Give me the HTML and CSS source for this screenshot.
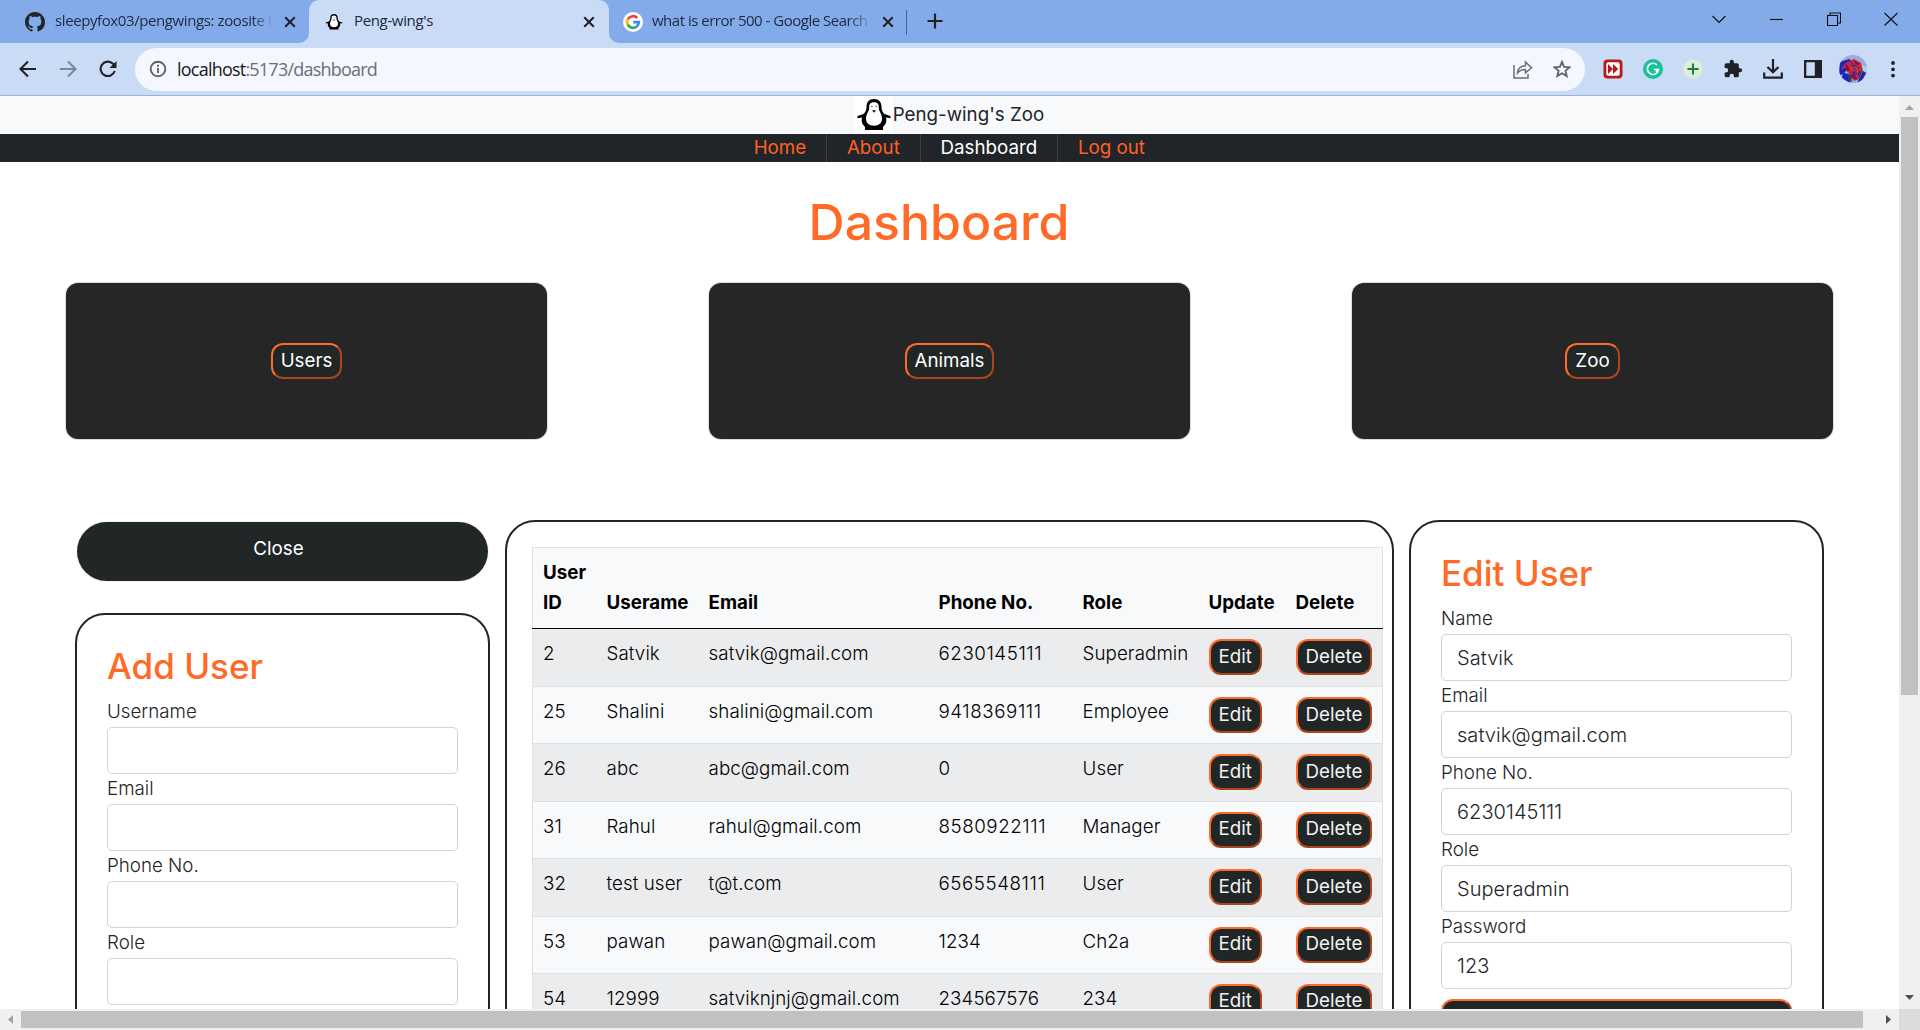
FILE: index.html
```html
<!DOCTYPE html>
<html lang="en">
<head>
<meta charset="utf-8">
<title>Peng-wing's</title>
<link rel="stylesheet" href="styles.css">
</head>
<body>
<div class="window">
  <header class="tabstrip">
    <div class="tab tab-first">
      <svg class="favicon" width="20" height="20" viewBox="0 0 16 16"><path fill="#20262c" d="M8 0C3.58 0 0 3.58 0 8c0 3.54 2.29 6.53 5.47 7.59.4.07.55-.17.55-.38 0-.19-.01-.82-.01-1.49-2.01.37-2.53-.49-2.69-.94-.09-.23-.48-.94-.82-1.13-.28-.15-.68-.52-.01-.53.63-.01 1.08.58 1.23.82.72 1.21 1.87.87 2.33.66.07-.52.28-.87.51-1.07-1.78-.2-3.64-.89-3.64-3.95 0-.87.31-1.59.82-2.15-.08-.2-.36-1.02.08-2.12 0 0 .67-.21 2.2.82.64-.18 1.32-.27 2-.27s1.36.09 2 .27c1.53-1.04 2.2-.82 2.2-.82.44 1.1.16 1.92.08 2.12.51.56.82 1.27.82 2.15 0 3.07-1.87 3.75-3.65 3.95.29.25.54.73.54 1.48 0 1.07-.01 1.93-.01 2.2 0 .21.15.46.55.38A8.01 8.01 0 0 0 16 8c0-4.42-3.58-8-8-8z"/></svg>
      <span class="tab-title fade t1">sleepyfox03/pengwings: zoosite in</span>
      <svg class="close" width="12" height="12" viewBox="0 0 12 12"><path d="M1.200 1.200l9.600 9.600M10.800 1.200l-9.600 9.600"/></svg>
    </div>
    <div class="tab tab-active">
      <svg class="favicon" width="18" height="18" viewBox="0 0 36 36"><use href="#penguin"/></svg>
      <span class="tab-title t2">Peng-wing's</span>
      <svg class="close" width="12" height="12" viewBox="0 0 12 12"><path d="M1.200 1.200l9.600 9.600M10.800 1.200l-9.600 9.600"/></svg>
    </div>
    <div class="tab tab-last">
      <svg class="favicon" width="20" height="20" viewBox="0 0 20 20"><circle cx="10" cy="10" r="10" fill="#fff"/><g fill="none" stroke-width="2.700"><path stroke="#ea4335" d="M4.900 7.200A5.800 5.800 0 0 1 14.200 6"/><path stroke="#fbbc05" d="M4.900 7.100a5.900 5.900 0 0 0 0 5.800"/><path stroke="#34a853" d="M4.800 12.700a5.800 5.800 0 0 0 9 1.700"/><path stroke="#4285f4" d="M10.200 10.200h5.500a5.800 5.800 0 0 1-1.900 4.200"/></g></svg>
      <span class="tab-title fade t3">what is error 500 - Google Search</span>
      <svg class="close" width="12" height="12" viewBox="0 0 12 12"><path d="M1.200 1.200l9.600 9.600M10.800 1.200l-9.600 9.600"/></svg>
    </div>
    <i class="tab-divider"></i>
    <svg class="newtab" width="16" height="16" viewBox="0 0 16 16"><path d="M8 .5v15M.5 8h15"/></svg>
    <div class="controls">
      <svg width="14" height="14" viewBox="0 0 14 14"><path d="M.5 4l6.500 6.500L13.500 4"/></svg>
      <svg width="14" height="14" viewBox="0 0 14 14"><path d="M0 7.500h13"/></svg>
      <svg width="14" height="14" viewBox="0 0 14 14"><path d="M.5 3.500h10v10H.5zM3 3.500V1h10.500v10H10.500"/></svg>
      <svg width="14" height="14" viewBox="0 0 14 14"><path d="M.5 1l13 12.500M13.500 1L.5 13.500"/></svg>
    </div>
  </header>

  <div class="toolbar">
    <div class="navbtns">
      <svg width="18" height="18" viewBox="0 0 18 18"><path d="M17 9H2M9 1.500L1.500 9 9 16.500"/></svg>
      <svg class="dim" width="18" height="18" viewBox="0 0 18 18"><path d="M1 9h15M9 1.500L16.500 9 9 16.500"/></svg>
      <svg width="18" height="18" viewBox="0 0 18 18"><path d="M15.700 11A7.200 7.200 0 1 1 14 3.800L16 6"/><path d="M17.500 1v7h-7z" fill="#202124" stroke="none"/></svg>
    </div>
    <div class="omnibox">
      <svg class="info" width="18" height="18" viewBox="0 0 18 18"><circle cx="9" cy="9" r="7.300"/><path d="M9 8v5M9 4.800v2"/></svg>
      <span class="url"><b>localhost</b>:5173/dashboard</span>
      <svg class="share" width="20" height="19" viewBox="0 0 20 19"><path d="M1 5v13h14v-4M4.500 13c.5-5 3-7 8-7.200V2l6 5.800-6 5V9.500c-4 0-6 1-8 3.500z"/></svg>
      <svg class="star" width="18" height="18" viewBox="0 0 18 18"><path d="M9 1.800l2.100 5 5.400.5-4.100 3.500 1.300 5.300L9 13.300l-4.700 2.800 1.300-5.300L1.500 7.300l5.400-.5z"/></svg>
    </div>
    <div class="extensions">
      <svg width="20" height="20" viewBox="0 0 20 20"><rect x=".5" y=".5" width="19" height="19" rx="4" fill="#b8191d"/><rect x="3.300" y="3.300" width="13.400" height="13.400" rx="2" fill="#fff"/><path fill="#b8191d" d="M5 5l5 5-5 5zM10 5l5.300 5-5.300 5z"/></svg>
      <svg width="20" height="20" viewBox="0 0 20 20"><circle cx="10" cy="10" r="10" fill="#15c39a"/><path d="M14 6A5.600 5.600 0 1 0 15.500 10.500H11M15.500 10.500l-2.500 2.500" fill="none" stroke="#fff" stroke-width="1.700"/></svg>
      <svg width="20" height="20" viewBox="0 0 20 20"><circle cx="10" cy="10" r="9.800" fill="#dceed8"/><path d="M10 4.500v11M4.500 10h11" stroke="#1c7a4c" stroke-width="2"/></svg>
      <svg width="20" height="20" viewBox="0 0 24 24"><path fill="#202124" d="M20.500 11H19V7a2 2 0 0 0-2-2h-4V3.500a2.500 2.500 0 0 0-5 0V5H4a2 2 0 0 0-2 2v3.800h1.500a2.700 2.700 0 0 1 0 5.400H2V20a2 2 0 0 0 2 2h3.800v-1.500a2.700 2.700 0 0 1 5.400 0V22H17a2 2 0 0 0 2-2v-4h1.500a2.500 2.500 0 0 0 0-5z"/></svg>
      <svg width="20" height="20" viewBox="0 0 20 20"><path d="M10 0v13M4.500 8L10 13.300 15.500 8M1.200 13.500v5.200h17.600v-5.200" fill="none" stroke="#202124" stroke-width="2.200"/></svg>
      <svg width="20" height="20" viewBox="0 0 20 20"><path fill="#202124" fill-rule="evenodd" d="M1 1h18v18H1zM3.300 3.300v13.400h8.500V3.300z"/></svg>
      <svg class="avatar" width="28" height="28" viewBox="0 0 28 28"><clipPath id="round"><circle cx="14" cy="14" r="14"/></clipPath><g clip-path="url(#round)"><path fill="#99a9e3" d="M0 0h28v28H0z"/><path fill="#9adbe5" d="M20 9l8 3v6l-7-4z"/><path fill="#1624ba" d="M1 7l9-3 5 4-9 9-4 3H0zM4 17l6 3 1 8-8-5zM24 16l3 2-4 8-5 2z"/><path fill="#d42130" d="M8 7l7-3 7 4 2 8-3 7-6 3-5-6-2-8-6 3 2-5z"/><path fill="#7e1239" d="M7 8l4 7-3 2zM15 5l6 4-4 1zM11 21l5-3 1 7z"/><path fill="#253f68" d="M12 9l6 3-3 3zM18 17l5-1-3 7zM8 18l4 3 1 6-4-2z"/><path d="M2 11l6-1M10 6l10 7-9 9M12 17l8 2M14 20l5 5" stroke="#1b36d1" fill="none"/><path d="M11 14l6-2 2 6" stroke="#ee4040" fill="none"/></g></svg>
      <svg width="20" height="20" viewBox="0 0 20 20" fill="#202124"><circle cx="10" cy="4" r="1.900"/><circle cx="10" cy="10.300" r="1.900"/><circle cx="10" cy="16.600" r="1.900"/></svg>
    </div>
  </div>

  <div class="viewport">
    <div class="page">
      <div class="brand">
        <svg class="logo" width="38" height="38" viewBox="-1 -1 38 38">
          <g id="penguin"><path fill="#000" d="M18 2c-5 0-7.500 3-7.500 8 0 3-1 5-3 7L1.500 19v2.200l4.500-.7c-.5 2-.5 4 .5 6.500L9 30v3h18v-3l2.500-3c1-2.500 1-4.500.5-6.500l4.500.7V19l-6-2c-2-2-3-4-3-7 0-5-2.500-8-7.500-8z"/><path fill="#fff" d="M18 5.200c-4 0-5 2.300-4.800 5.300.2 3.500-3 6.500-3.200 10.500-.2 5 3 7.700 8 7.700s8.200-2.700 8-7.700c-.2-4-3.400-7-3.200-10.500.2-3-.8-5.300-4.800-5.300z"/><path fill="#111" d="M16 13.200h4L18 15.800z"/><path stroke="#777" d="M14.800 9.500h2M19.200 9.500h2"/></g>
        </svg>
        <span>Peng-wing's Zoo</span>
      </div>
      <nav class="menu">
        <a>Home</a><a>About</a><a class="current">Dashboard</a><a>Log out</a>
      </nav>
      <h1>Dashboard</h1>
      <section class="cards">
        <div class="card"><button class="btn">Users</button></div>
        <div class="card"><button class="btn">Animals</button></div>
        <div class="card"><button class="btn">Zoo</button></div>
      </section>
      <section class="panels">
        <div class="left">
          <button class="close-btn">Close</button>
          <form class="panel form">
            <h2>Add User</h2>
            <label>Username</label><input>
            <label>Email</label><input>
            <label>Phone No.</label><input>
            <label>Role</label><input>
          </form>
        </div>
        <div class="panel list">
          <table>
            <colgroup><col class="c1"><col class="c2"><col class="c3"><col class="c4"><col class="c5"><col class="c6"><col class="c7"></colgroup>
            <thead><tr><th>User<br>ID</th><th>Userame</th><th>Email</th><th>Phone No.</th><th>Role</th><th>Update</th><th>Delete</th></tr></thead>
            <tbody>
              <tr><td>2</td><td>Satvik</td><td>satvik@gmail.com</td><td class="phone">6230145111</td><td>Superadmin</td><td><button class="btn">Edit</button></td><td><button class="btn">Delete</button></td></tr>
              <tr><td>25</td><td>Shalini</td><td>shalini@gmail.com</td><td class="phone">9418369111</td><td>Employee</td><td><button class="btn">Edit</button></td><td><button class="btn">Delete</button></td></tr>
              <tr><td>26</td><td>abc</td><td>abc@gmail.com</td><td>0</td><td>User</td><td><button class="btn">Edit</button></td><td><button class="btn">Delete</button></td></tr>
              <tr><td>31</td><td>Rahul</td><td>rahul@gmail.com</td><td class="phone">8580922111</td><td>Manager</td><td><button class="btn">Edit</button></td><td><button class="btn">Delete</button></td></tr>
              <tr><td>32</td><td>test user</td><td>t@t.com</td><td class="phone">6565548111</td><td>User</td><td><button class="btn">Edit</button></td><td><button class="btn">Delete</button></td></tr>
              <tr><td>53</td><td>pawan</td><td>pawan@gmail.com</td><td>1234</td><td>Ch2a</td><td><button class="btn">Edit</button></td><td><button class="btn">Delete</button></td></tr>
              <tr><td>54</td><td>12999</td><td>satviknjnj@gmail.com</td><td>234567576</td><td>234</td><td><button class="btn">Edit</button></td><td><button class="btn">Delete</button></td></tr>
            </tbody>
          </table>
        </div>
        <form class="panel form edit">
          <h2>Edit User</h2>
          <label>Name</label><input value="Satvik">
          <label>Email</label><input value="satvik@gmail.com">
          <label>Phone No.</label><input value="6230145111">
          <label>Role</label><input value="Superadmin">
          <label>Password</label><input value="123">
          <button class="btn submit" type="button"></button>
        </form>
      </section>
    </div>
    <div class="vbar"><svg width="21" height="21" viewBox="0 0 21 21"><path fill="#a3a3a3" d="M6 14l4.500-5 4.500 5z"/></svg><i></i><svg width="21" height="21" viewBox="0 0 21 21"><path fill="#505050" d="M6 7l4.500 5L15 7z"/></svg></div>
    <div class="hbar"><svg width="21" height="21" viewBox="0 0 21 21"><path fill="#a3a3a3" d="M13 6l-5 4.500 5 4.500z"/></svg><i></i><svg width="21" height="21" viewBox="0 0 21 21"><path fill="#505050" d="M8 6l5 4.500L8 15z"/></svg></div>
    <div class="corner"></div>
  </div>
</div>
</body>
</html>
```
FILE: styles.css
```css
* { box-sizing: border-box; }
body { margin: 0; overflow: hidden; font-family: Inter, "Liberation Sans", sans-serif; }
svg { display: block; flex: none; }
.window { width: 1920px; height: 1030px; display: flex; flex-direction: column; overflow: hidden; }

/* browser frame */
.tabstrip { height: 43px; display: flex; align-items: center; background: #cadbf6; font-family: "Open Sans", "Noto Sans", sans-serif; font-size: 15px; color: #1d2a3f; }
.tab { height: 43px; display: flex; align-items: center; background: #84abe9; }
.tab-first { width: 309px; padding: 0 13px 0 25px; border-bottom-right-radius: 10px; }
.tab-active { width: 300px; padding: 0 14px 0 16px; background: #cadbf6; border-radius: 10px 10px 0 0; box-shadow: 0 -10px 0 10px #84abe9; clip-path: inset(0); }
.tab-last { width: 297px; padding: 0 12px 0 14px; border-bottom-left-radius: 10px; }
.tab-title { white-space: nowrap; overflow: hidden; line-height: 24px; margin-top: -3px; }
.t1 { margin-left: 10px; width: 219px; letter-spacing: -.4px; }
.t2 { margin-left: 11px; letter-spacing: -.35px; }
.t3 { margin-left: 9px; width: 220px; letter-spacing: -.5px; }
.fade { -webkit-mask-image: linear-gradient(90deg, #000 90%, transparent 100%); mask-image: linear-gradient(90deg, #000 90%, transparent 100%); }
.close { margin-left: auto; stroke: #202124; stroke-width: 2; fill: none; }
.tab-divider { width: 14px; height: 43px; background: linear-gradient(#47628f, #47628f) 0 10px / 1px 25px no-repeat #84abe9; }
.newtab { width: 32px; height: 43px; padding: 13px 9px 14px 7px; background: #84abe9; stroke: #202124; stroke-width: 2.2; }
.controls { flex: 1; height: 43px; display: flex; align-items: center; justify-content: flex-end; gap: 43.200px; padding: 0 22px 6px 0; background: #84abe9; stroke: #111; fill: none; stroke-width: 1.1; }
.toolbar { height: 53px; display: flex; align-items: center; background: #cadbf6; border-bottom: 1px solid #9fb3d6; }
.navbtns { display: flex; gap: 22px; width: 135px; padding-left: 19px; fill: none; stroke: #202124; stroke-width: 2.1; }
.dim { opacity: .45; }
.omnibox { width: 1450px; height: 43px; display: flex; align-items: center; padding: 0 14px; border-radius: 22px; background: #f4f7fd; }
.info { fill: none; stroke: #5f6368; stroke-width: 1.9; }
.url { margin-left: 10px; flex: 1; font: 18px "Open Sans", "Noto Sans", sans-serif; letter-spacing: -.78px; color: #6b6e74; }
.url b { font-weight: 400; color: #17181b; }
.share { fill: none; stroke: #6a6d72; stroke-width: 1.500; margin-right: 20px; }
.star { fill: none; stroke: #5f6368; stroke-width: 1.8; }
.extensions { display: flex; align-items: center; gap: 20px; padding-left: 17.500px; }
.avatar { margin: 0 -4px; }

/* scrolling area */
.viewport { height: 934px; display: grid; grid-template: 913px 21px / 1899px 21px; }
.page { overflow: hidden; background: #fff; color: #212529; font-size: 18.750px; line-height: 30px; font-weight: 300; }
.vbar, .hbar { display: flex; background: #f0f0f0; }
.vbar { flex-direction: column; grid-area: 1 / 2; }
.hbar { grid-area: 2 / 1; }
.vbar i { width: 17px; height: 578px; margin: 0 2px auto; background: #c1c1c1; }
.hbar i { width: 1842px; height: 17px; margin: 2px auto 0 0; background: #c1c1c1; }
.corner { background: #dcdcdc; }

.brand { height: 38px; display: flex; align-items: center; justify-content: center; background: #f8f9fb; font-weight: 400; line-height: 38px; }
.logo { background: #fff; }
.menu { height: 28px; display: flex; justify-content: center; background: #212529; font-weight: 400; line-height: 27px; color: #ff6022; }
.menu a { padding: 0 20px 0 19.700px; border-right: 1px solid #3b3f42; }
.menu a:last-child { border: 0; }
.menu .current { color: #fff; }
h1 { margin: 29px 21px 0 0; height: 64px; text-align: center; font-size: 50px; line-height: 62px; font-weight: 500; color: #ff6a28; }
.cards { display: flex; justify-content: space-between; padding: 28px 66px 0; }
.card { width: 481px; height: 156px; display: flex; align-items: center; justify-content: center; border-radius: 12px; background: #262626; box-shadow: 0 0 0 1px #ddd; }
.btn { display: block; height: 36px; padding: 0 8px 1px; border: 2px solid; border-color: #ff6a28 #ad441a #ad441a #ff6a28; border-radius: 12px; background: #212727; color: #fff; font: 400 18.750px/30px Inter, sans-serif; }

.panels { display: flex; align-items: flex-start; padding: 81px 75px 0; }
.left { width: 415px; margin-right: 15px; }
.close-btn { display: block; width: 411px; height: 59px; margin: 2px 2px 32px; padding: 0 8px 5px 0; border: 0; border-radius: 30px; background: #212727; box-shadow: 0 0 0 1px #f3f3f3; color: #fff; font: 400 18.750px/30px Inter, sans-serif; }
.panel { border: 2px solid #212529; border-radius: 30px; height: 700px; }
.form { width: 415px; padding: 30px; }
h2 { margin: 0 0 10px; font-size: 35px; line-height: 42px; font-weight: 500; color: #ff6a28; }
.form label { display: block; height: 30px; }
.form input { display: block; width: 351px; height: 47px; padding: 0 15px; border: 1px solid #ced4da; border-radius: 5px; background: #fff; color: #212529; font: 300 20px Inter, sans-serif; letter-spacing: .05px; }
.list { width: 889px; padding: 25px 11px 0 25px; margin-right: 15px; }
.submit { width: 351px; height: 40px; margin-top: 10px; }

table { width: 850px; table-layout: fixed; border-collapse: collapse; border: 1px solid #dee2e6; background: #f8f9fb; color: #000; }
.c1 { width: 64px; } .c2 { width: 102px; } .c3 { width: 230px; } .c4 { width: 144px; } .c5 { width: 126px; } .c6 { width: 87px; } .c7 { width: 97px; }
th { height: 81px; padding: 10px; text-align: left; vertical-align: bottom; font-weight: 700; border-bottom: 1px solid #000; }
td { height: 57.400px; padding: 10px; vertical-align: top; white-space: nowrap; border-bottom: 1px solid #dee2e6; letter-spacing: .08px; }
tbody tr:first-child td { height: 58px; }
td:nth-child(-n+5) { padding-top: 10px; }
td.phone { letter-spacing: .55px; }
tbody tr:nth-child(odd) { background: #ebecee; }
td .btn { color: #f2f2f2; }
```
